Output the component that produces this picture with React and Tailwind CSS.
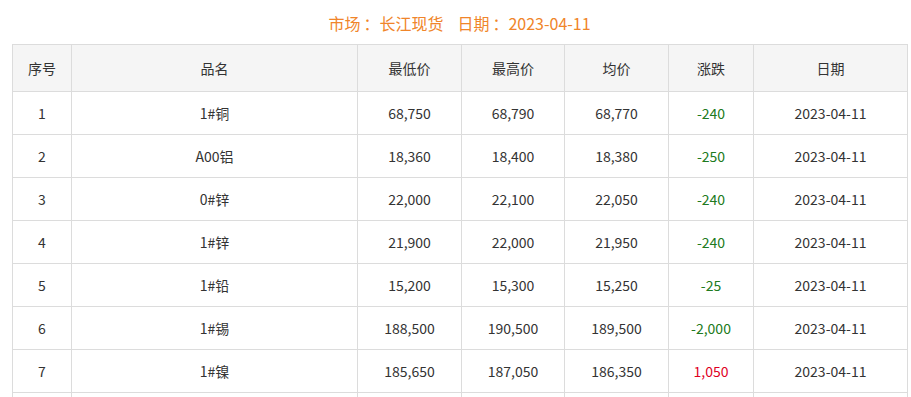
import React from 'react';

const rows = [
    ['1', '1#铜', '68,750', '68,790', '68,770', '-240', '2023-04-11'],
    ['2', 'A00铝', '18,360', '18,400', '18,380', '-250', '2023-04-11'],
    ['3', '0#锌', '22,000', '22,100', '22,050', '-240', '2023-04-11'],
    ['4', '1#锌', '21,900', '22,000', '21,950', '-240', '2023-04-11'],
    ['5', '1#铅', '15,200', '15,300', '15,250', '-25', '2023-04-11'],
    ['6', '1#锡', '188,500', '190,500', '189,500', '-2,000', '2023-04-11'],
    ['7', '1#镍', '185,650', '187,050', '186,350', '1,050', '2023-04-11'],
];

const headers = ['序号', '品名', '最低价', '最高价', '均价', '涨跌', '日期'];
const widths = ['w-[59px]', 'w-[286px]', 'w-[104px]', 'w-[103px]', 'w-[104px]', 'w-[85px]', 'w-[154px]'];

const App = () => {
    return (
        <div className="bg-white h-[397px] overflow-hidden font-['Microsoft_YaHei','Noto_Sans_CJK_SC',sans-serif] text-[14px] text-[#333]">
            <div className="ml-[12px] w-[895px]">
                {/* title */}
                <h2 className="h-[44px] pt-[11px] flex justify-center gap-[14px] text-[16px] leading-[24px] text-[#f0852a]">
                    <span>市场<span className="ml-[3px]">：</span>长江现货</span>
                    <span>日期<span className="ml-[3px]">：</span>2023-04-11</span>
                </h2>

                <table className="w-[895px] table-fixed border-collapse">
                    <thead>
                        <tr className="bg-[#f5f5f5] h-[47px]">
                            {headers.map((h, i) => (
                                <th key={h} className={`${widths[i]} border border-[#dcdcdc] font-normal text-center`}>{h}</th>
                            ))}
                        </tr>
                    </thead>
                    <tbody>
                        {rows.map((r) => (
                            <tr key={r[0]} className="h-[43px]">
                                {r.map((c, i) => {
                                    let color = '';
                                    if (i === 5) color = c.startsWith('-') ? 'text-[#207a20]' : 'text-[#e0001f]';
                                    return (
                                        <td key={i} className={`border border-[#dcdcdc] text-center ${color}`}>{c}</td>
                                    );
                                })}
                            </tr>
                        ))}
                        {/* next row continues below the fold */}
                        <tr className="h-[43px]">
                            {headers.map((h) => (
                                <td key={h} className="border border-[#dcdcdc]"></td>
                            ))}
                        </tr>
                    </tbody>
                </table>
            </div>
        </div>
    );
};

export default App;
